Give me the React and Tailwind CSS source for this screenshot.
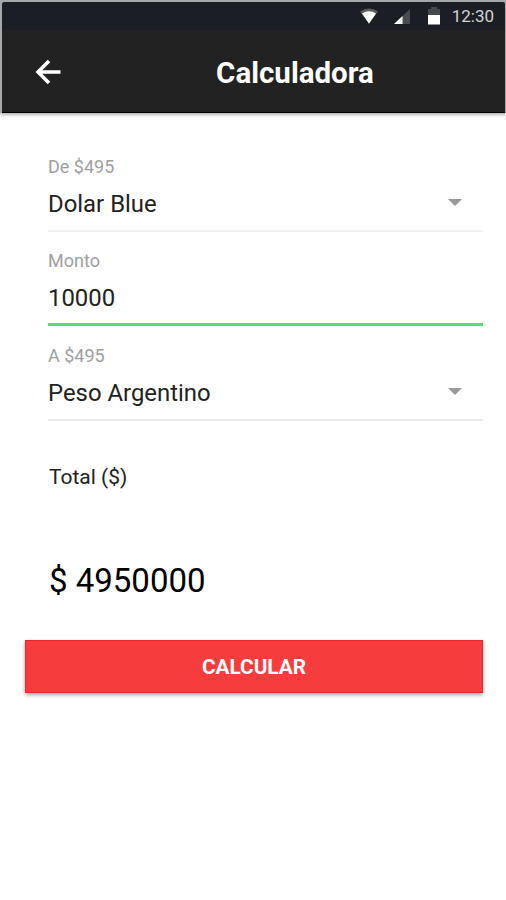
const StatusBar = () => (
  <div className="flex h-7 items-center justify-end rounded-t-xs bg-[#1b1f25] pr-[11px] text-[#d2d3d4]">
    <svg viewBox="0 0 18 16" className="h-4 w-[18px]">
      <path d="M0 3.500Q9-2.500 18 3.500L9 16Z" fill="#5a5d62" />
      <path d="M2 5.500Q9 1 16 5.500L9 15.500Z" fill="#fff" />
    </svg>
    <svg viewBox="0 0 16 15" className="ml-4 h-[15px] w-4">
      <path d="M16 0V15H0Z" fill="#484b50" />
      <path d="M8.500 7V15H0Z" fill="#fff" />
    </svg>
    <svg viewBox="0 0 12 18" className="ml-[18px] h-[18px] w-3">
      <path d="M3 0h6v2h3v7H0V2h3Z" fill="#45494e" />
      <path d="M0 8h12v9.500H0Z" fill="#fff" />
    </svg>
    <span className="ml-3 text-[17px] leading-none">12:30</span>
  </div>
);

const Field = ({ label, value, select, line }) => (
  <div className={`h-[95px] ${line}`}>
    <div className="pt-[18px] text-lg leading-6 text-[#a0a0a0]">{label}</div>
    <div className="mt-[11px] flex items-center justify-between pr-[21px] text-[23.900px] leading-7 text-[#222]">
      {value}
      {select && (
        <svg viewBox="0 0 14 7" className="-mt-[3px] h-[7px] w-3.5">
          <path d="M0 0H14L7 7Z" fill="#999" />
        </svg>
      )}
    </div>
  </div>
);

export default function App() {
  return (
    <div className="h-[900px] w-full bg-white font-['Roboto',sans-serif] text-black">
      <div className="bg-[#a5a8aa] pt-0.5 pr-px pl-0.5 shadow-[0_2px_3px_rgba(0,0,0,0.3)]">
        <StatusBar />
        <header className="flex h-[83px] items-center border-b border-black bg-[#222] text-white">
          <svg
            viewBox="0 0 26 26"
            className="mt-px ml-[33px] h-[26px] w-[26px]"
            fill="none"
            stroke="#fff"
            strokeWidth="3.500"
          >
            <path d="M25.500 13H3M14 2L3 13L14 24" />
          </svg>
          <h1 className="flex-1 pt-1 pl-[24px] text-center text-[29.500px] font-bold">
            Calculadora
          </h1>
        </header>
      </div>
      <main className="pt-6 pr-[23px] pl-12">
        <Field label="De $495" value="Dolar Blue" select line="border-b-2 border-[#f2f2f2]" />
        <Field label="Monto" value="10000" line="-mt-px mb-px border-b-[3px] border-[#5bdb7c]" />
        <Field label="A $495" value="Peso Argentino" select line="-mt-px border-b-2 border-[#e9e9e9]" />
        <p className="mt-[42px] pl-px text-[21px] leading-7 text-[#222]">Total ($)</p>
        <p className="mt-[70px] pl-px text-[33px] leading-10">$ 4950000</p>
        <button className="mt-[39px] -ml-[23px] h-[53px] w-[458px] border border-[#ee2428] bg-[#f73c3e] pt-0.5 text-[20.800px] font-bold text-white shadow-[0_2px_4px_rgba(0,0,0,0.35)]">
          CALCULAR
        </button>
      </main>
    </div>
  );
}
